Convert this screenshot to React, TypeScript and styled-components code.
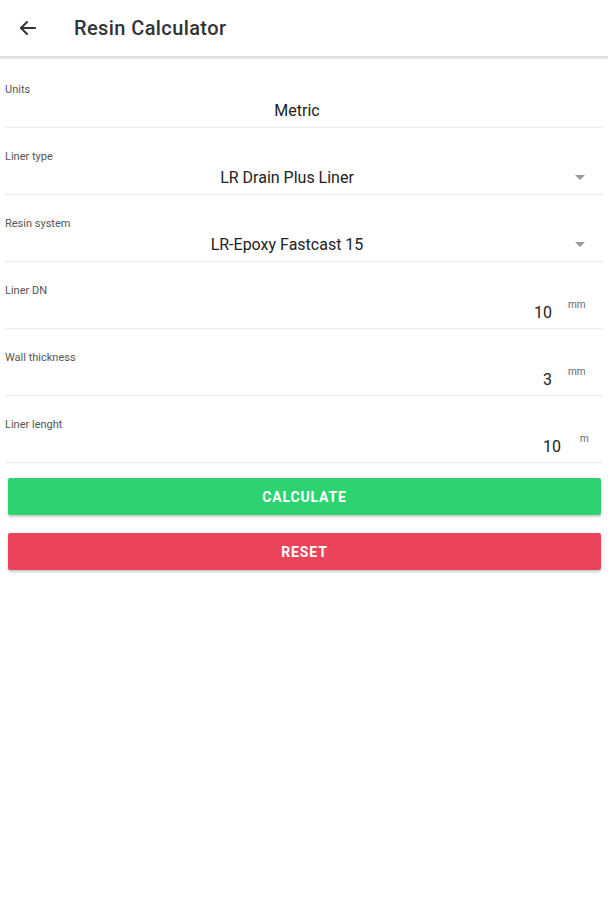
import React, { useState } from 'react';
import styled, { createGlobalStyle } from 'styled-components';

const GlobalStyle = createGlobalStyle`
  html, body {
    margin: 0;
    padding: 0;
    background: #ffffff;
    font-family: Roboto, "Noto Sans", "Liberation Sans", sans-serif;
  }
`;

const Page = styled.div`
  width: 608px;
  min-height: 900px;
  background: #fff;
`;

const Toolbar = styled.header`
  height: 56px;
  display: flex;
  align-items: center;
  box-shadow: 0 1px 2px rgba(0, 0, 0, 0.14), 0 2px 3px rgba(0, 0, 0, 0.06);
  border-bottom: 1px solid #e2e2e2;
`;

const BackButton = styled.button`
  width: 56px;
  height: 56px;
  display: flex;
  align-items: center;
  justify-content: center;
  background: none;
  border: none;
  padding: 0;
  color: #333;
  cursor: pointer;
`;

const Title = styled.h1`
  margin: 0 0 0 18px;
  font-size: 20px;
  font-weight: 500;
  color: #333;
  letter-spacing: 0.4px;
`;

const Content = styled.main`
  padding-top: 4px;
`;

const Field = styled.div`
  margin: 0 5px;
  height: 67px;
  box-sizing: border-box;
  padding-top: 23px;
  border-bottom: 1px solid #ececec;
  display: flex;
  flex-direction: column;
`;

const Label = styled.label`
  font-size: 11px;
  line-height: 12px;
  color: #555;
`;

const ValueRow = styled.div`
  margin-top: 4px;
  height: 20px;
  display: flex;
  align-items: center;
  position: relative;
`;

const SelectValue = styled.div<{ $arrow?: boolean }>`
  flex: 1;
  text-align: center;
  font-size: 16px;
  color: #222;
  padding-right: ${(p) => (p.$arrow ? '34px' : '14px')};
`;

const Caret = styled.span`
  position: absolute;
  right: 18px;
  top: 8px;
  width: 0;
  height: 0;
  border-left: 5px solid transparent;
  border-right: 5px solid transparent;
  border-top: 5px solid #9a9a9a;
`;

const NumberValue = styled.input`
  flex: 1;
  border: none;
  outline: none;
  background: transparent;
  text-align: right;
  font-family: inherit;
  font-size: 16px;
  color: #222;
  padding: 0;
  margin-top: 2px;
`;

const Unit = styled.span<{ $short?: boolean }>`
  width: ${(p) => (p.$short ? '42px' : '51px')};
  padding-left: ${(p) => (p.$short ? '19px' : '16px')};
  box-sizing: border-box;
  align-self: flex-start;
  margin-top: -2px;
  font-size: 10px;
  color: #666;
`;

const Actions = styled.div`
  padding: 15px 7px 0 8px;
  display: flex;
  flex-direction: column;
  gap: 18px;
`;

const ActionButton = styled.button<{ $color: string }>`
  height: 37px;
  border: none;
  border-radius: 2px;
  background: ${(p) => p.$color};
  color: #fff;
  font-family: inherit;
  font-size: 14px;
  font-weight: 700;
  letter-spacing: 0.06em;
  text-transform: uppercase;
  box-shadow: 0 2px 2px rgba(0, 0, 0, 0.16), 0 1px 4px rgba(0, 0, 0, 0.08);
  cursor: pointer;
`;

const BackArrow = () => (
  <svg width="24" height="24" viewBox="0 0 24 24" fill="none" stroke="#333" strokeWidth="2" strokeLinecap="round" strokeLinejoin="round">
    <path d="M19 12H5" />
    <path d="M11 6l-6 6 6 6" />
  </svg>
);

export default function App() {
  const [dn, setDn] = useState('10');
  const [wall, setWall] = useState('3');
  const [len, setLen] = useState('10');

  return (
    <Page>
      <GlobalStyle />
      <Toolbar>
        <BackButton aria-label="Back">
          <BackArrow />
        </BackButton>
        <Title>Resin Calculator</Title>
      </Toolbar>
      <Content>
        <Field>
          <Label>Units</Label>
          <ValueRow>
            <SelectValue>Metric</SelectValue>
          </ValueRow>
        </Field>
        <Field>
          <Label>Liner type</Label>
          <ValueRow>
            <SelectValue $arrow>LR Drain Plus Liner</SelectValue>
            <Caret />
          </ValueRow>
        </Field>
        <Field>
          <Label>Resin system</Label>
          <ValueRow>
            <SelectValue $arrow>LR-Epoxy Fastcast 15</SelectValue>
            <Caret />
          </ValueRow>
        </Field>
        <Field>
          <Label>Liner DN</Label>
          <ValueRow>
            <NumberValue value={dn} onChange={(e) => setDn(e.target.value)} />
            <Unit>mm</Unit>
          </ValueRow>
        </Field>
        <Field>
          <Label>Wall thickness</Label>
          <ValueRow>
            <NumberValue value={wall} onChange={(e) => setWall(e.target.value)} />
            <Unit>mm</Unit>
          </ValueRow>
        </Field>
        <Field>
          <Label>Liner lenght</Label>
          <ValueRow>
            <NumberValue value={len} onChange={(e) => setLen(e.target.value)} />
            <Unit $short>m</Unit>
          </ValueRow>
        </Field>
        <Actions>
          <ActionButton $color="#2dd36f">Calculate</ActionButton>
          <ActionButton $color="#eb445a">Reset</ActionButton>
        </Actions>
      </Content>
    </Page>
  );
}
